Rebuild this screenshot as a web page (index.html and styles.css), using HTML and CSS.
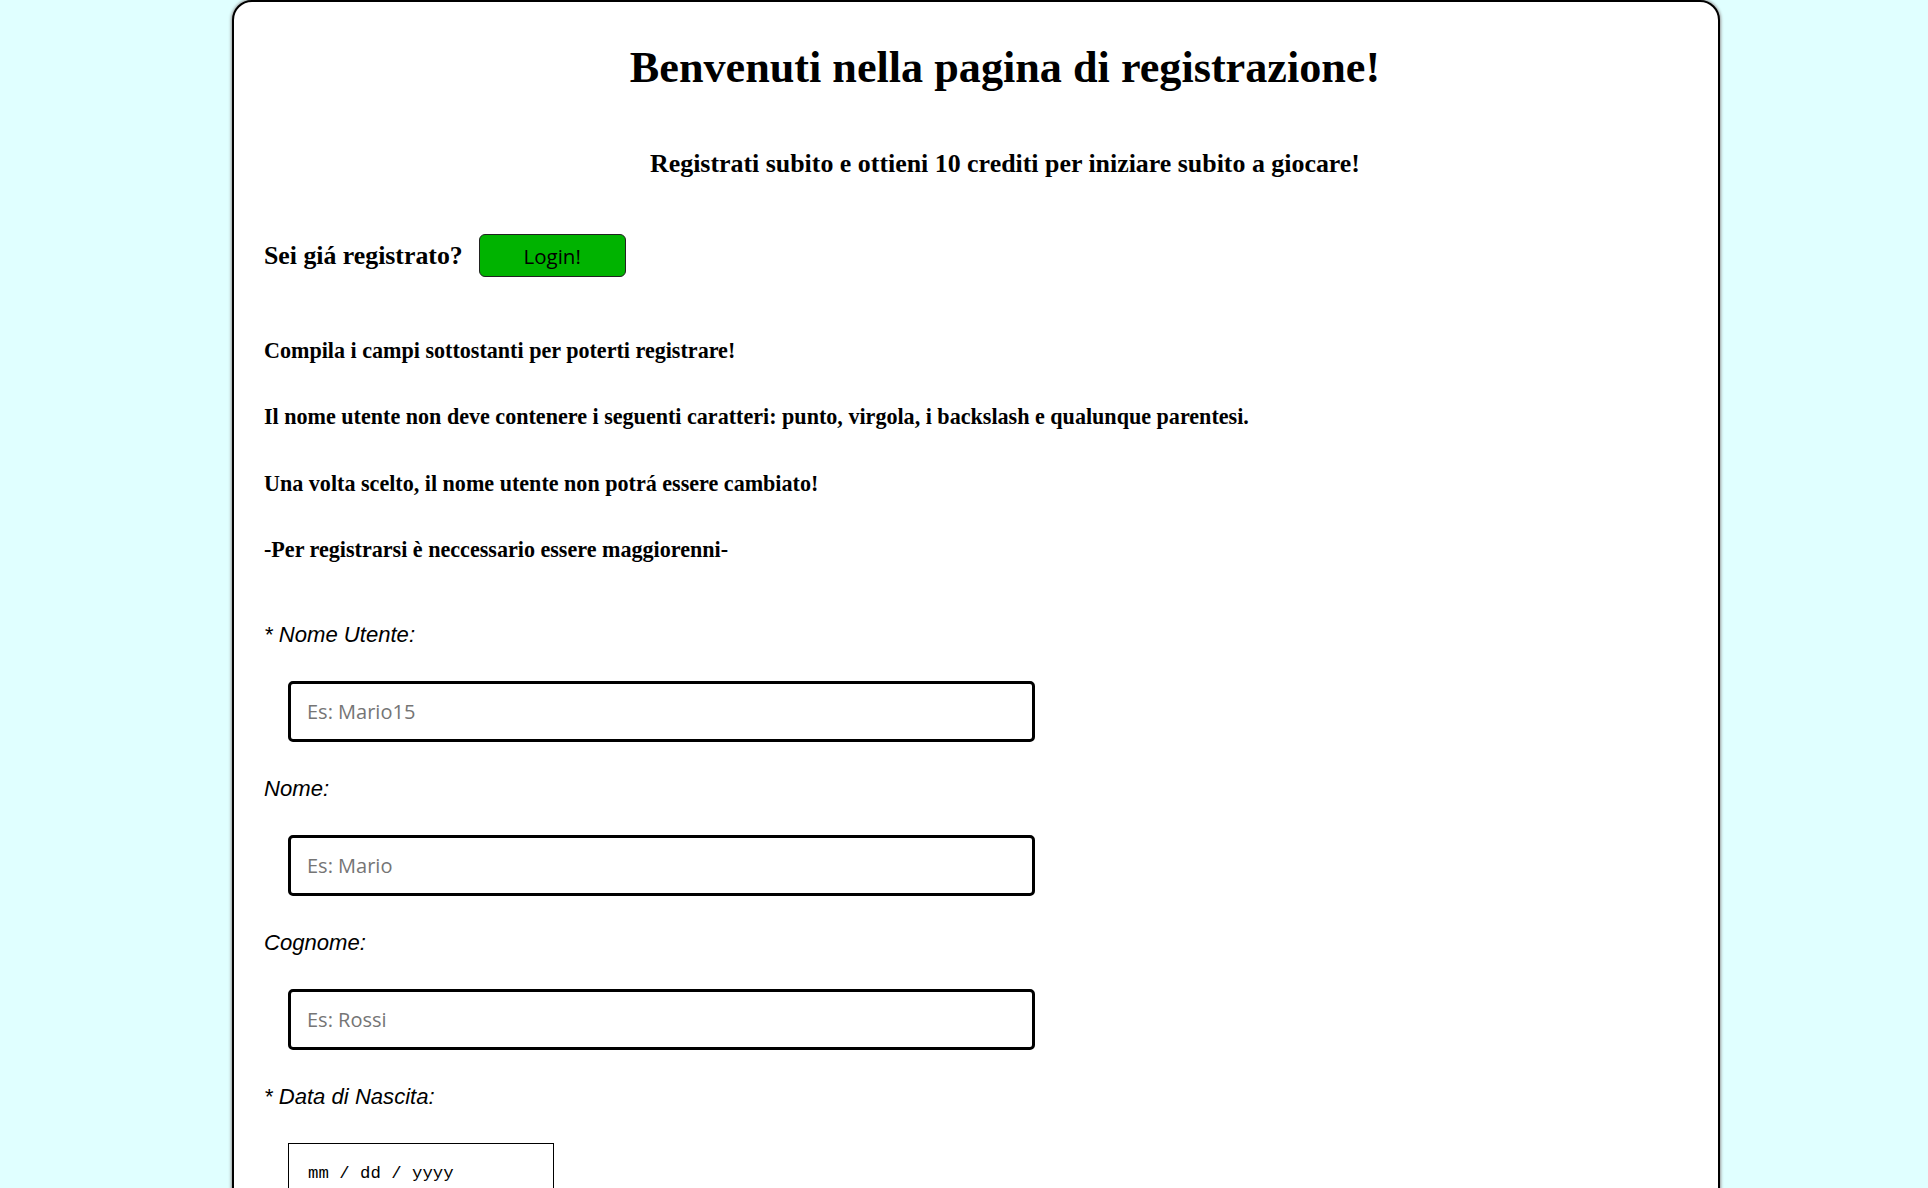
FILE: index.html
```html
<!DOCTYPE html>
<html lang="it">
<head>
<meta charset="utf-8">
<title>Registrazione</title>
<link rel="stylesheet" href="styles.css">
</head>
<body>
<main class="card">
  <header class="intro">
    <h1 class="title">Benvenuti nella pagina di registrazione!</h1>
    <h3 class="subtitle">Registrati subito e ottieni 10 crediti per iniziare subito a giocare!</h3>
  </header>
  <div class="login-row">
    <h3 class="login-text">Sei giá registrato?</h3>
    <button class="login-btn" type="button">Login!</button>
  </div>
  <section class="notes">
    <p class="note">Compila i campi sottostanti per poterti registrare!</p>
    <p class="note">Il nome utente non deve contenere i seguenti caratteri: punto, virgola, i backslash e qualunque parentesi.</p>
    <p class="note">Una volta scelto, il nome utente non potrá essere cambiato!</p>
    <p class="note">-Per registrarsi è neccessario essere maggiorenni-</p>
  </section>
  <form class="form">
    <label class="field-label" for="user">* Nome Utente:</label>
    <input class="field" id="user" type="text" placeholder="Es: Mario15">
    <label class="field-label" for="nome">Nome:</label>
    <input class="field" id="nome" type="text" placeholder="Es: Mario">
    <label class="field-label" for="cognome">Cognome:</label>
    <input class="field" id="cognome" type="text" placeholder="Es: Rossi">
    <label class="field-label" for="data">* Data di Nascita:</label>
    <input class="field-date" id="data" type="text" placeholder="mm / dd / yyyy">
  </form>
</main>
</body>
</html>
```
FILE: styles.css
```css
html, body {
  margin: 0;
  padding: 0;
}
body {
  background: #e0ffff;
  font-family: "Liberation Serif", "Times New Roman", serif;
  color: #000;
}
.card {
  box-sizing: border-box;
  width: 1488px;
  margin: 0 0 0 232px;
  padding: 41px 0 200px 30px;
  background: #fff;
  border: 2px solid #000;
  border-radius: 20px;
  box-shadow: 0 0 3px 1px #999;
  min-height: 1400px;
}
.intro {
  margin-right: -28px;
  text-align: center;
}
.title {
  margin: 0;
  font-size: 44.2px;
  line-height: 50px;
  font-weight: bold;
}
.subtitle {
  margin: 56px 0 0;
  font-size: 25.9px;
  line-height: 30px;
  font-weight: bold;
}
.login-row {
  display: flex;
  align-items: center;
  gap: 16px;
  margin-top: 55px;
}
.login-text {
  margin: 0;
  font-size: 25.8px;
  line-height: 30px;
  font-weight: bold;
}
.login-btn {
  box-sizing: border-box;
  width: 147px;
  height: 43px;
  background: #00b300;
  border: 1px solid #222;
  border-radius: 6px;
  font-family: "Open Sans", "Noto Sans", sans-serif;
  font-size: 20.5px;
  color: #000;
  padding: 0;
}
.notes {
  margin-top: 62px;
}
.note {
  margin: 0 0 42px;
  font-size: 22.1px;
  line-height: 24.4px;
  font-weight: bold;
}
.notes .note:last-child {
  margin-bottom: 0;
}
.form {
  display: flex;
  flex-direction: column;
  align-items: flex-start;
  margin-top: 60px;
}
.field-label {
  font-family: "Liberation Sans", Arial, sans-serif;
  font-style: italic;
  font-size: 22.1px;
  line-height: 24px;
  margin-bottom: 34.4px;
}
.field {
  box-sizing: border-box;
  width: 747px;
  height: 61px;
  margin: 0 0 34.6px 24px;
  padding: 0 16px;
  border: 3px solid #000;
  border-radius: 5px;
  font-family: "Open Sans", "Noto Sans", sans-serif;
  font-size: 20px;
  outline: none;
}
.field::placeholder {
  color: #757575;
}
.field-date {
  box-sizing: border-box;
  width: 266px;
  height: 61px;
  margin: 0 0 34px 24px;
  padding: 0 19px;
  border: 1px solid #000;
  border-radius: 0;
  font-family: "Liberation Mono", "Courier New", monospace;
  font-size: 17.33px;
  outline: none;
}
.field-date::placeholder {
  color: #000;
}
```
